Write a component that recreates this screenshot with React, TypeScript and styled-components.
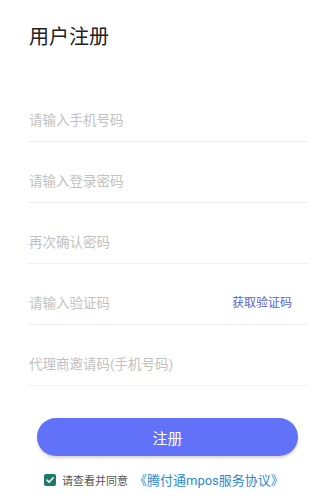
import styled, { createGlobalStyle } from "styled-components";

const GlobalStyle = createGlobalStyle`
  body {
    margin: 0;
    background: #fff;
    font-family: Roboto, "Noto Sans CJK SC", sans-serif;
  }
`;

const Page = styled.div`
  width: 335px;
  height: 504px;
  padding: 0 27px 0 28px;
  box-sizing: border-box;
  display: flex;
  flex-direction: column;
`;

const Title = styled.h1`
  margin: 24px 0 0 1px;
  font-size: 20px;
  line-height: 26px;
  font-weight: 400;
  color: #222;
`;

const Form = styled.div`
  margin-top: 31px;
  display: flex;
  flex-direction: column;
`;

const Row = styled.div`
  height: 61px;
  box-sizing: border-box;
  display: flex;
  align-items: flex-end;
  justify-content: space-between;
  padding: 0 16px 11px 1px;
  border-bottom: 1px solid #f1f1f1;
`;

const Input = styled.input`
  border: none;
  outline: none;
  padding: 0;
  flex: 1;
  min-width: 0;
  font-family: inherit;
  font-size: 13.5px;
  line-height: 20px;
  color: #333;
  background: transparent;

  &::placeholder {
    color: #c2c2c2;
  }
`;

const CodeButton = styled.span`
  margin-left: -2px;
  font-size: 12px;
  line-height: 20px;
  color: #5a5fd6;
`;

const Submit = styled.button`
  margin: 32px 10px 0 9px;
  height: 38px;
  border: none;
  border-radius: 19px;
  background: #6272f8;
  color: #fff;
  font-family: inherit;
  font-size: 15px;
  box-shadow: 0 2px 3px rgba(90, 80, 40, 0.25);
`;

const Agree = styled.label`
  margin-top: 14px;
  padding-left: 16px;
  display: flex;
  align-items: center;
`;

const Box = styled.span`
  width: 12px;
  height: 12px;
  border-radius: 2px;
  background: #1d7a6b;
  display: flex;
  align-items: center;
  justify-content: center;
`;

const AgreeText = styled.span`
  margin-left: 6px;
  font-size: 11px;
  color: #555;
`;

const Link = styled.span`
  margin-left: 6px;
  font-size: 13px;
  color: #2b88d2;
`;

export default function App() {
  return (
    <>
      <GlobalStyle />
      <Page>
        <Title>用户注册</Title>
        <Form>
          <Row>
            <Input placeholder="请输入手机号码" />
          </Row>
          <Row>
            <Input placeholder="请输入登录密码" type="password" />
          </Row>
          <Row>
            <Input placeholder="再次确认密码" type="password" />
          </Row>
          <Row>
            <Input placeholder="请输入验证码" />
            <CodeButton>获取验证码</CodeButton>
          </Row>
          <Row>
            <Input placeholder="代理商邀请码(手机号码)" />
          </Row>
        </Form>
        <Submit>注册</Submit>
        <Agree>
          <Box>
            <svg width="10" height="10" viewBox="0 0 10 10">
              <path
                d="M2 5.2 4.1 7.2 8.2 2.8"
                fill="none"
                stroke="#fff"
                strokeWidth="1.6"
                strokeLinecap="round"
                strokeLinejoin="round"
              />
            </svg>
          </Box>
          <AgreeText>请查看并同意</AgreeText>
          <Link>《腾付通mpos服务协议》</Link>
        </Agree>
      </Page>
    </>
  );
}
